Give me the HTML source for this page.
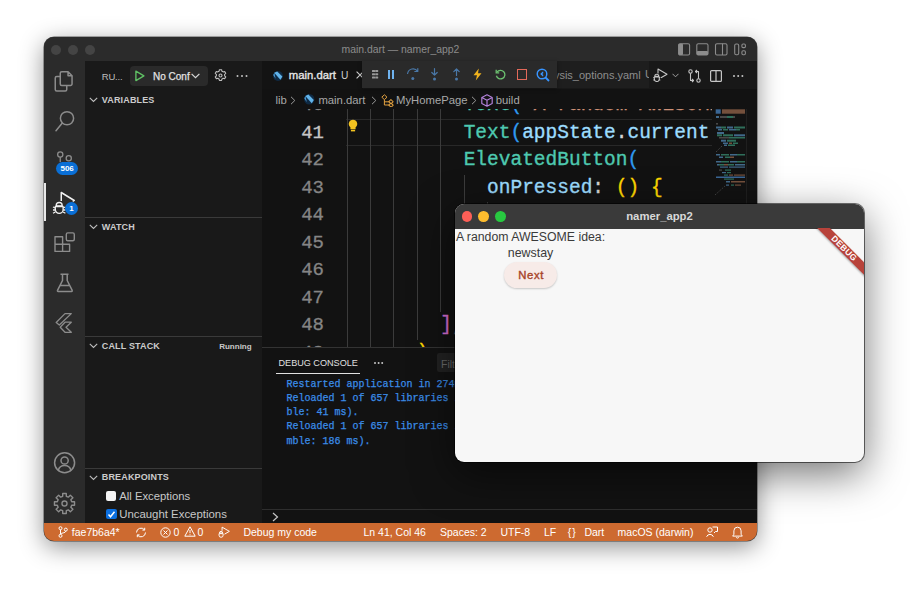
<!DOCTYPE html>
<html><head><meta charset="utf-8">
<style>
*{box-sizing:border-box;margin:0;padding:0}
html,body{width:910px;height:600px;overflow:hidden;background:#fff;font-family:"Liberation Sans",sans-serif}
.abs{position:absolute}
#vs{position:absolute;left:44px;top:37px;width:713px;height:504px;border-radius:10px;overflow:hidden;background:#2b2b2b;
 box-shadow:0 0 0 0.5px rgba(0,0,0,.6),0 6px 24px rgba(0,0,0,.44)}
#title{left:0;top:0;width:713px;height:24px;background:#2b2b2b}
.tl{position:absolute;top:8.3px;width:10px;height:10px;border-radius:50%;background:#444}
#titletext{position:absolute;left:0;width:713px;top:6.5px;text-align:center;color:#8b8b8b;font-size:10.4px}
.lay{position:absolute;top:7px;}
#act{left:0;top:24px;width:41px;height:462px;background:#2b2b2b}
#side{left:41px;top:24px;width:177px;height:462px;background:#191919}
#editor{left:218px;top:24px;width:495px;height:462px;background:#121212}
#status{left:0;top:486px;width:713px;height:18px;background:#cd6a30;color:#fff;font-size:10.5px}
#status span{position:absolute;top:3px;white-space:nowrap}
.bc{color:#a8a8a8;font-size:11.3px;white-space:nowrap}
.con{color:#3b8de8;-webkit-text-stroke:0.25px #3b8de8;font-family:"Liberation Mono",monospace;font-size:10px;line-height:14.3px;white-space:pre}
.sh{position:absolute;color:#cccccc;font-weight:bold;font-size:9px;letter-spacing:0.15px;margin-top:0.5px}
.chev{position:absolute;}
.bord{position:absolute;left:0;width:177px;height:1px;background:#3a3a3a}
#code{position:absolute;left:0;top:48px;width:450px;height:238px;overflow:hidden;font-family:"Liberation Mono",monospace;font-size:19.5px}
.ln{position:absolute;width:62px;text-align:right;color:#858585;left:0;font-family:"Liberation Mono",monospace;font-size:19px;line-height:27.5px;-webkit-text-stroke:0.3px}
.cl{position:absolute;left:84.6px;white-space:pre;color:#d4d4d4;line-height:27.5px;-webkit-text-stroke:0.35px}
.guide{position:absolute;width:1px;background:#3b3b3b}
#flutter{position:absolute;left:455px;top:204px;width:409px;height:258px;border-radius:9px;overflow:hidden;background:#f7f7f7;
 box-shadow:0 0 0 1px rgba(0,0,0,.55),0 12px 42px rgba(0,0,0,.55)}
</style></head><body>
<div id="vs">
 <div id="title" class="abs">
  <div class="tl" style="left:7px"></div><div class="tl" style="left:23.9px"></div><div class="tl" style="left:40.7px"></div>
  <div id="titletext">main.dart — namer_app2</div>
<svg class="abs" style="left:630px;top:4px" width="80" height="18" viewBox="0 0 80 18" fill="none" stroke="#8c8c8c" stroke-width="1.1">
   <rect x="4.6" y="2.8" width="11" height="11.2" rx="1.5"/><rect x="4.6" y="2.8" width="4.4" height="11.2" fill="#8c8c8c" stroke="none" rx="1"/>
   <rect x="22.8" y="2.8" width="11.2" height="11.2" rx="1.5"/><rect x="22.8" y="10" width="11.2" height="4" fill="#8c8c8c" stroke="none" rx="1"/>
   <rect x="41.5" y="2.8" width="11.5" height="11.2" rx="1.5"/><path d="M48.5 2.8 v11.2"/>
   <rect x="60.7" y="3" width="4" height="10.8" rx="1.5"/><rect x="67.9" y="3" width="3.5" height="3.6" rx="1.2"/><rect x="67.9" y="9.8" width="3.5" height="4" rx="1.2"/>
  </svg>
 </div>
 <div id="act" class="abs">
  <svg class="abs" style="left:0;top:0" width="41" height="462" viewBox="0 0 41 462" fill="none" stroke="#8c8c8c" stroke-width="1.5" stroke-linejoin="round">
   <!-- files: abs y offset 61 -->
   <path d="M16.25 15.5 h-3.5 a1.5 1.5 0 0 0 -1.5 1.5 v11.5 a1.5 1.5 0 0 0 1.5 1.5 h8.5 a1.5 1.5 0 0 0 1.5 -1.5 v-3.5"/>
   <path d="M16.25 12.3 a1.5 1.5 0 0 1 1.5 -1.5 h6.3 l4 4 v8.2 a1.5 1.5 0 0 1 -1.5 1.5 h-8.8 a1.5 1.5 0 0 1 -1.5 -1.5 z M24.05 10.8 v4 h4"/>
   <!-- search -->
   <circle cx="23" cy="57.25" r="6.6"/>
   <path d="M18.3 62 L12 69.7" stroke-linecap="round"/>
   <!-- source control -->
   <circle cx="16.25" cy="93.5" r="2.6" stroke-width="1.3"/>
   <circle cx="24.75" cy="97.25" r="2.6" stroke-width="1.3"/>
   <path d="M16.25 96.1 v5" stroke-width="1.3"/>
   <!-- extensions -->
   <path d="M11 175.8 h7.6 v14.6 h-7.6 z M11 183.3 h14.6 v7.1 h-7 M18.6 183.3 v7.1" stroke-width="1.4"/>
   <rect x="22.3" y="171.9" width="8" height="7.8" rx="1.5" stroke-width="1.4"/>
   <!-- flask -->
   <path d="M16.5 213.25 h8 M18.5 213.5 v6 l-5 9.8 a0.8 0.8 0 0 0 0.7 1.2 h13.3 a0.8 0.8 0 0 0 0.7 -1.2 l-5 -9.8 v-6 M15.8 224.5 h9.4"/>
   <!-- flutter -->
   <path d="M21 252.6 H27.3 L15.3 264 L12.2 261.5 Z M21 261.2 H27.3 L22 266.2 L27.3 271.3 H21 L16.2 266.2 Z" stroke-width="1.3"/>
   <!-- account -->
   <circle cx="20.6" cy="401.75" r="10"/>
   <circle cx="20.6" cy="399.5" r="3.6"/>
   <path d="M14.2 409.6 a6.6 6.6 0 0 1 12.8 0"/>
  </svg>
  <svg class="abs" style="left:9px;top:430.5px" width="23" height="23" viewBox="-11.5 -11.5 23 23" fill="none" stroke="#8c8c8c" stroke-width="1.4" stroke-linejoin="round"><path d="M-1.81 -7.17 L-1.79 -10.04 L1.79 -10.04 L1.81 -7.17 L3.79 -6.35 L5.83 -8.37 L8.37 -5.83 L6.35 -3.79 L7.17 -1.81 L10.04 -1.79 L10.04 1.79 L7.17 1.81 L6.35 3.79 L8.37 5.83 L5.83 8.37 L3.79 6.35 L1.81 7.17 L1.79 10.04 L-1.79 10.04 L-1.81 7.17 L-3.79 6.35 L-5.83 8.37 L-8.37 5.83 L-6.35 3.79 L-7.17 1.81 L-10.04 1.79 L-10.04 -1.79 L-7.17 -1.81 L-6.35 -3.79 L-8.37 -5.83 L-5.83 -8.37 L-3.79 -6.35 Z"/><circle cx="0" cy="0" r="2.5"/></svg>
  <!-- run & debug active -->
  <div class="abs" style="left:0;top:122px;width:2px;height:38px;background:#e8e8e8"></div>
  <svg class="abs" style="left:0;top:0" width="41" height="462" viewBox="0 0 41 462" fill="none" stroke="#f0f0f0" stroke-width="1.5" stroke-linejoin="round">
   <path d="M17.25 140 v-8.5 l13 8 -1.5 1"/>
   <g stroke-width="1.3" transform="translate(0,-1.5)">
    <path d="M12.2 146 a3 3 0 0 1 6 0 v0.5 h-6 z"/>
    <path d="M11.3 147 h7.8 v3 a3.9 3.9 0 0 1 -7.8 0 z"/>
    <path d="M9 147.5 l2.3 1 M9 150.5 h2.3 M9 153.8 l2.3 -1.3 M21.4 147.5 l-2.3 1 M21.4 150.5 h-2.3 M21.4 153.8 l-2.3 -1.3"/>
   </g>
  </svg>
  <div class="abs" style="left:21px;top:140.5px;width:13px;height:13px;border-radius:50%;background:#0a6fd6;color:#fff;font-size:8px;font-weight:bold;text-align:center;line-height:13px">1</div>
  <div class="abs" style="left:12px;top:100.5px;width:22.25px;height:13.5px;border-radius:7px;background:#0a6fd6;color:#fff;font-size:8px;font-weight:bold;text-align:center;line-height:13.5px">506</div>
 </div>
 <div id="side" class="abs">
  <div class="abs" style="left:16.8px;top:9.5px;color:#bdbdbd;font-size:9.5px;white-space:nowrap;letter-spacing:-0.2px">RU...</div>
  <div class="abs" style="left:45px;top:5.3px;width:78px;height:19.4px;border-radius:4px;background:#2a2a2a"></div>
  <svg class="abs" style="left:49px;top:9px" width="12" height="12" viewBox="0 0 12 12" fill="none" stroke="#5fbf64" stroke-width="1.4" stroke-linejoin="round"><path d="M1.9 1.2 v9.4 l8 -4.7 z"/></svg>
  <div class="abs" style="left:68px;top:9.6px;color:#e2e2e2;font-size:10px;white-space:nowrap;-webkit-text-stroke:0.25px #e2e2e2">No Conf</div>
  <svg class="abs" style="left:106px;top:11.5px" width="9" height="6" viewBox="0 0 9 6" fill="none" stroke="#d8d8d8" stroke-width="1.2"><path d="M0.6 0.8 l3.9 3.9 3.9 -3.9"/></svg>
  <svg class="abs" style="left:129px;top:8.3px" width="13" height="13" viewBox="-6.5 -6.5 13 13" fill="none" stroke="#c0c0c0" stroke-width="1.1" stroke-linejoin="round">
   <path d="M-1.1 -5.8 h2.2 l0.3 1.5 a4.4 4.4 0 0 1 1.3 .75 l1.45 -.5 1.1 1.9 -1.15 1 a4.4 4.4 0 0 1 0 1.5 l1.15 1 -1.1 1.9 -1.45 -.5 a4.4 4.4 0 0 1 -1.3 .75 l-.3 1.5 h-2.2 l-.3 -1.5 a4.4 4.4 0 0 1 -1.3 -.75 l-1.45 .5 -1.1 -1.9 1.15 -1 a4.4 4.4 0 0 1 0 -1.5 l-1.15 -1 1.1 -1.9 1.45 .5 a4.4 4.4 0 0 1 1.3 -.75 z"/><circle r="1.5"/></svg>
  <div class="abs" style="left:156px;top:13.8px;width:2.2px;height:2.2px;border-radius:50%;background:#c0c0c0;box-shadow:4.5px 0 0 #c0c0c0,-4.5px 0 0 #c0c0c0"></div>
  <!-- variables -->
  <svg class="abs chev" style="left:4px;top:36px" width="9" height="6" viewBox="0 0 9 6" fill="none" stroke="#bdbdbd" stroke-width="1.1"><path d="M0.8 0.8 l3.7 3.7 3.7 -3.7"/></svg>
  <div class="sh" style="left:16.8px;top:33px">VARIABLES</div>
  <div class="bord" style="top:156px"></div>
  <svg class="abs chev" style="left:4px;top:163px" width="9" height="6" viewBox="0 0 9 6" fill="none" stroke="#bdbdbd" stroke-width="1.1"><path d="M0.8 0.8 l3.7 3.7 3.7 -3.7"/></svg>
  <div class="sh" style="left:16.8px;top:160px">WATCH</div>
  <div class="bord" style="top:275px"></div>
  <svg class="abs chev" style="left:4px;top:282px" width="9" height="6" viewBox="0 0 9 6" fill="none" stroke="#bdbdbd" stroke-width="1.1"><path d="M0.8 0.8 l3.7 3.7 3.7 -3.7"/></svg>
  <div class="sh" style="left:16.8px;top:279px">CALL STACK</div>
  <div class="abs" style="left:134.2px;top:280.5px;color:#c8c8c8;font-weight:bold;font-size:8px">Running</div>
  <div class="bord" style="top:407px"></div>
  <svg class="abs chev" style="left:4px;top:414px" width="9" height="6" viewBox="0 0 9 6" fill="none" stroke="#bdbdbd" stroke-width="1.1"><path d="M0.8 0.8 l3.7 3.7 3.7 -3.7"/></svg>
  <div class="sh" style="left:16.8px;top:410px">BREAKPOINTS</div>
  <div class="abs" style="left:21px;top:429.8px;width:10.4px;height:10px;border-radius:2px;background:#f4f4f4"></div>
  <div class="abs" style="left:34.2px;top:428.6px;color:#c8c8c8;font-size:11.3px;white-space:nowrap">All Exceptions</div>
  <div class="abs" style="left:21px;top:448px;width:10.8px;height:10.4px;border-radius:2px;background:#0b6fe0"></div>
  <svg class="abs" style="left:21px;top:448px" width="11" height="11" viewBox="0 0 11 11" fill="none" stroke="#fff" stroke-width="1.5"><path d="M2.5 5.6 l2 2.2 4 -5"/></svg>
  <div class="abs" style="left:34.2px;top:447px;color:#c8c8c8;font-size:11.4px;white-space:nowrap">Uncaught Exceptions</div>
 </div>
 <div id="editor" class="abs">
  <!-- tab bar -->
  <div class="abs" style="left:0;top:0;width:495px;height:28px;background:#181818"></div>
  <div class="abs" style="left:0;top:0;width:101px;height:28px;background:#131313"></div>
  <div class="abs" style="left:250px;top:0;width:137px;height:27px;background:#1e1e1e;overflow:hidden">
    <div class="abs" style="right:8.3px;top:7.5px;color:#8d8d8d;font-size:11px;white-space:nowrap">analysis_options.yaml</div><div class="abs" style="left:133px;top:7px;color:#8d8d8d;font-size:11.4px">U</div>
  </div>
  <svg class="abs" style="left:10px;top:8.5px" width="12" height="12" viewBox="0 0 12 12"><circle cx="6" cy="6" r="5" fill="#0f2a44"/><path d="M2.2 2.8 L5.2 1.4 L10.4 6.6 L8.4 9.8 Z" fill="#62b4ea"/><path d="M1.2 5 L2.4 2.8 L3.6 8.8 Z" fill="#4a9ad4"/></svg>
  <div class="abs" style="left:26.8px;top:7.5px;color:#e6e6e6;font-size:11.3px;-webkit-text-stroke:0.35px #e6e6e6;white-space:nowrap">main.dart</div>
  <div class="abs" style="left:79px;top:8.5px;color:#d0d0d0;font-size:10.2px;white-space:nowrap">U</div>
  <svg class="abs" style="left:93.5px;top:9.5px" width="8" height="8" viewBox="0 0 8 8" stroke="#d0d0d0" stroke-width="1.1"><path d="M0.6 0.6 L7.4 7.4 M7.4 0.6 L0.6 7.4"/></svg>
  <!-- editor actions -->
  <svg class="abs" style="left:391px;top:7px" width="16" height="14" viewBox="0 0 16 14" fill="none" stroke="#c5c5c5" stroke-width="1.1" stroke-linejoin="round"><path d="M5 5.5 V1 l9 5.2 -6 3.5"/><path d="M1.8 8.2 a2 2 0 0 1 4 0 z M1.3 9 h5 v2 a2.5 2.5 0 0 1 -5 0 z M0.3 9.5 h1 M6.3 9.5 h1 M0.3 12 h1 M6.3 12 h1"/></svg>
  <svg class="abs" style="left:409.5px;top:12px" width="7" height="5" viewBox="0 0 7 5" fill="none" stroke="#a0a0a0" stroke-width="1"><path d="M0.5 0.8 l3 3 3 -3"/></svg>
  <svg class="abs" style="left:426px;top:8px" width="13" height="14" viewBox="0 0 13 14" fill="none" stroke="#c5c5c5" stroke-width="1.1" stroke-linejoin="round"><circle cx="2.5" cy="2.5" r="1.7"/><circle cx="10.5" cy="11.5" r="1.7"/><path d="M2.5 4.2 V11.5 h3 M4 10 l1.5 1.5 -1.5 1.5 M10.5 9.8 V2.5 h-3 M9 1 l-1.5 1.5 1.5 1.5"/></svg>
  <svg class="abs" style="left:448px;top:8.5px" width="12" height="12" viewBox="0 0 12 12" fill="none" stroke="#c5c5c5" stroke-width="1.2"><rect x="0.6" y="0.6" width="10.8" height="10.8" rx="1"/><path d="M6 0.6 V11.4"/></svg>
  <div class="abs" style="left:470.5px;top:13.5px;width:2px;height:2px;border-radius:50%;background:#c5c5c5;box-shadow:4.2px 0 0 #c5c5c5,8.4px 0 0 #c5c5c5"></div>
  <!-- breadcrumbs -->
  <div class="abs" style="left:0;top:28px;width:495px;height:20px;background:#121212"></div>
  <div class="abs bc" style="left:13.4px;top:32.5px">lib</div>
  <svg class="abs" style="left:28.3px;top:34.5px" width="6" height="9" viewBox="0 0 6 9" fill="none" stroke="#9a9a9a" stroke-width="1"><path d="M1 0.8 l3.8 3.7 -3.8 3.7"/></svg>
  <svg class="abs" style="left:40.5px;top:31.5px" width="12.5" height="12.5" viewBox="0 0 12 12"><circle cx="6" cy="6" r="5" fill="#0f2a44"/><path d="M2.2 2.8 L5.2 1.4 L10.4 6.6 L8.4 9.8 Z" fill="#62b4ea"/><path d="M1.2 5 L2.4 2.8 L3.6 8.8 Z" fill="#4a9ad4"/></svg>
  <div class="abs bc" style="left:56.4px;top:32.5px">main.dart</div>
  <svg class="abs" style="left:109px;top:34.5px" width="6" height="9" viewBox="0 0 6 9" fill="none" stroke="#9a9a9a" stroke-width="1"><path d="M1 0.8 l3.8 3.7 -3.8 3.7"/></svg>
  <svg class="abs" style="left:118.5px;top:32.5px" width="13" height="13" viewBox="0 0 13 13" fill="none" stroke="#e0a040" stroke-width="1" stroke-linejoin="round"><path d="M0.8 3.2 l2.6 -2.4 2.6 2.4 -2.6 2.4 z M3.4 5.6 V11 h5 M3.4 7.8 h5"/><rect x="8.4" y="6.2" width="3.2" height="3" transform="rotate(45 10 7.7)"/><rect x="8.4" y="9.6" width="3.2" height="3" transform="rotate(45 10 11.1)"/></svg>
  <div class="abs bc" style="left:134px;top:32.5px">MyHomePage</div>
  <svg class="abs" style="left:208.5px;top:34.5px" width="6" height="9" viewBox="0 0 6 9" fill="none" stroke="#9a9a9a" stroke-width="1"><path d="M1 0.8 l3.8 3.7 -3.8 3.7"/></svg>
  <svg class="abs" style="left:219px;top:32.5px" width="12" height="13" viewBox="0 0 12 13" fill="none" stroke="#b180d7" stroke-width="1.2" stroke-linejoin="round"><path d="M6 0.8 L11.2 3.5 V9.5 L6 12.2 L0.8 9.5 V3.5 Z M0.8 3.5 L6 6.2 L11.2 3.5 M6 6.2 V12.2"/></svg>
  <div class="abs bc" style="left:233.8px;top:32.5px">build</div>
  <div id="code"><div class="abs" style="left:84px;top:9.6px;width:411px;height:27px;border-top:1px solid #282828;border-bottom:1px solid #282828"></div>
<div class="guide" style="left:84.6px;top:-17.0px;height:275.0px"></div>
<div class="guide" style="left:108.0px;top:-17.0px;height:275.0px"></div>
<div class="guide" style="left:131.4px;top:-17.0px;height:275.0px"></div>
<div class="guide" style="left:154.8px;top:-17.0px;height:247.5px"></div>
<div class="guide" style="left:178.2px;top:-17.0px;height:220.0px"></div>
<div class="guide" style="left:201.6px;top:65.5px;height:110.0px"></div>
<div class="guide" style="left:225.0px;top:93px;height:27.5px"></div>
<div class="ln" style="top:-17.0px;color:#858585">40</div>
<div class="cl" style="top:-17.0px">          <span style="color:#4ec9b0">Text</span><span style="color:#2f9af0">(</span><span style="color:#ce9178">'A random AWESOME idea:'</span><span style="color:#2f9af0">)</span><span style="color:#d4d4d4">,</span></div>
<div class="ln" style="top:10.5px;color:#c6c6c6">41</div>
<div class="cl" style="top:10.5px">          <span style="color:#4ec9b0">Text</span><span style="color:#2f9af0">(</span><span style="color:#9cdcfe">appState</span><span style="color:#d4d4d4">.</span><span style="color:#9cdcfe">current</span><span style="color:#d4d4d4">.</span><span style="color:#9cdcfe">asLowerCase</span><span style="color:#2f9af0">)</span><span style="color:#d4d4d4">,</span></div>
<div class="ln" style="top:38.0px;color:#858585">42</div>
<div class="cl" style="top:38.0px">          <span style="color:#4ec9b0">ElevatedButton</span><span style="color:#2f9af0">(</span></div>
<div class="ln" style="top:65.5px;color:#858585">43</div>
<div class="cl" style="top:65.5px">            <span style="color:#9cdcfe">onPressed</span><span style="color:#d4d4d4">:</span> <span style="color:#ffd700">()</span> <span style="color:#ffd700">{</span></div>
<div class="ln" style="top:93.0px;color:#858585">44</div>
<div class="cl" style="top:93.0px">              <span style="color:#9cdcfe">appState</span><span style="color:#d4d4d4">.</span><span style="color:#dcdcaa">getNext</span><span style="color:#da70d6">()</span><span style="color:#d4d4d4">;</span></div>
<div class="ln" style="top:120.5px;color:#858585">45</div>
<div class="cl" style="top:120.5px">            <span style="color:#ffd700">}</span><span style="color:#d4d4d4">,</span></div>
<div class="ln" style="top:148.0px;color:#858585">46</div>
<div class="cl" style="top:148.0px">            <span style="color:#9cdcfe">child</span><span style="color:#d4d4d4">: </span><span style="color:#4ec9b0">Text</span><span style="color:#ffd700">(</span><span style="color:#ce9178">'Next'</span><span style="color:#ffd700">)</span><span style="color:#d4d4d4">,</span></div>
<div class="ln" style="top:175.5px;color:#858585">47</div>
<div class="cl" style="top:175.5px">          <span style="color:#2f9af0">)</span><span style="color:#d4d4d4">,</span></div>
<div class="ln" style="top:203.0px;color:#858585">48</div>
<div class="cl" style="top:203.0px">        <span style="color:#da70d6">]</span><span style="color:#d4d4d4">,</span></div>
<div class="ln" style="top:230.5px;color:#858585">49</div>
<div class="cl" style="top:230.5px">      <span style="color:#ffd700">)</span><span style="color:#d4d4d4">,</span></div>
<svg class="abs" style="left:86px;top:10px" width="10" height="14" viewBox="0 0 10 14"><path d="M5 0.8 a4.2 4.2 0 0 0 -2.6 7.5 v1.9 h5.2 v-1.9 a4.2 4.2 0 0 0 -2.6 -7.5z" fill="#f3c320"/><rect x="2.9" y="10.8" width="4.2" height="1.6" fill="#f3c320"/></svg></div>
<div class="abs" style="left:100.2px;top:-0.5px;width:194.5px;height:27px;background:#2a2a2a;box-shadow:0 1px 4px rgba(0,0,0,.35)">
   <div class="abs" style="left:10.2px;top:9.8px;width:2.2px;height:2.2px;border-radius:0.5px;background:#9a9a9a;box-shadow:3.2px 0 0 #9a9a9a,0 3.3px 0 #9a9a9a,3.2px 3.3px 0 #9a9a9a,0 6.6px 0 #9a9a9a,3.2px 6.6px 0 #9a9a9a"></div>
   <div class="abs" style="left:25.9px;top:9.9px;width:2px;height:8.3px;background:#6fb3f0"></div>
   <div class="abs" style="left:30.3px;top:9.9px;width:2px;height:8.3px;background:#6fb3f0"></div>
   <svg class="abs" style="left:0;top:0" width="194" height="27" viewBox="0 0 194 27" fill="none" stroke="#4a78a8" stroke-width="1.2" stroke-linecap="round" stroke-linejoin="round">
    <path d="M45.6 12.5 a5.5 5.5 0 0 1 10 -2.2 M55.8 7.5 v3 h-3"/><circle cx="50.8" cy="17.4" r="1.5" fill="#4a78a8" stroke="none"/>
    <path d="M72.5 7.5 v6.5 M69.8 11.5 l2.7 2.7 2.7 -2.7"/><circle cx="72.5" cy="18" r="1.5" fill="#4a78a8" stroke="none"/>
    <path d="M94.5 14.5 v-6.5 M91.8 10.7 l2.7 -2.7 2.7 2.7"/><circle cx="94.5" cy="18" r="1.5" fill="#4a78a8" stroke="none"/>
   </svg>
   <svg class="abs" style="left:110px;top:7.5px" width="11" height="13" viewBox="0 0 11 13"><path d="M6.8 0.5 L1.5 7.3 H5 L3.8 12.5 L9.5 5.2 H6 Z" fill="#f0b21d"/></svg>
   <svg class="abs" style="left:132.5px;top:8.3px" width="11" height="11" viewBox="0 0 11 11" fill="none" stroke="#6cc070" stroke-width="1.3"><path d="M2 3.2 a4.3 4.3 0 1 1 -0.6 3.6"/><path d="M1.2 0.8 v3 h3"/></svg>
   <div class="abs" style="left:154.8px;top:8.8px;width:9.8px;height:10.5px;border:1.4px solid #e2695a"></div>
   <svg class="abs" style="left:174px;top:7px" width="14" height="14" viewBox="0 0 14 14" fill="none" stroke="#3794ff" stroke-width="1.4"><circle cx="6" cy="6" r="4.8"/><path d="M9.5 9.5 l3.5 3.5" stroke-width="1.8"/><path d="M7.2 3.8 l-2.2 2.2 2.2 2.2 M5.2 6 h2" stroke-width="1.1"/></svg>
  </div>
  <div class="abs" style="left:453px;top:48px;width:42px;height:239px;background:#121212">
   <div class="abs" style="left:30.5px;top:0;width:1px;height:239px;background:#1f1f1f"></div>
   <svg class="abs" style="left:0;top:0" width="42" height="100" viewBox="0 0 42 100">
<rect x="0.7" y="0.3" width="5.0" height="4.4" fill="#3a6694"/>
<rect x="7.0" y="0.3" width="23.0" height="4.4" fill="#74503c"/>
<rect x="1.0" y="7.0" width="3.0" height="2" fill="#41698a"/>
<rect x="5.0" y="7.0" width="7.0" height="2" fill="#484848"/>
<rect x="12.0" y="7.0" width="6.0" height="2" fill="#2f6e5a"/>
<rect x="18.0" y="7.0" width="2.0" height="2" fill="#484848"/>
<rect x="1.0" y="14.0" width="2.0" height="1.6" fill="#484848"/>
<rect x="1.0" y="17.5" width="5.0" height="2" fill="#41698a"/>
<rect x="6.0" y="17.5" width="5.0" height="2" fill="#2f6e5a"/>
<rect x="12.0" y="17.5" width="6.0" height="2" fill="#41698a"/>
<rect x="19.0" y="17.5" width="11.0" height="2" fill="#2f6e5a"/>
<rect x="3.0" y="20.0" width="4.0" height="1.5" fill="#41698a"/>
<rect x="8.0" y="20.0" width="5.0" height="1.5" fill="#2f6e5a"/>
<rect x="14.0" y="20.0" width="7.0" height="1.5" fill="#41698a"/>
<rect x="21.0" y="20.0" width="4.0" height="1.5" fill="#2f6e5a"/>
<rect x="2.0" y="23.0" width="7.0" height="2" fill="#41698a"/>
<rect x="2.0" y="25.3" width="5.0" height="2" fill="#2f6e5a"/>
<rect x="8.0" y="25.3" width="10.0" height="2" fill="#2f6e5a"/>
<rect x="19.0" y="25.3" width="11.0" height="2" fill="#41698a"/>
<rect x="4.0" y="28.0" width="10.0" height="1.5" fill="#484848"/>
<rect x="14.0" y="28.0" width="16.0" height="1.5" fill="#2f6e5a"/>
<rect x="6.0" y="30.7" width="5.0" height="2" fill="#41698a"/>
<rect x="12.0" y="30.7" width="9.0" height="2" fill="#2f6e5a"/>
<rect x="8.0" y="33.5" width="5.0" height="1.5" fill="#41698a"/>
<rect x="14.0" y="33.5" width="3.0" height="1.5" fill="#74503c"/>
<rect x="18.0" y="33.5" width="5.0" height="1.5" fill="#2f6e5a"/>
<rect x="9.0" y="35.5" width="3.0" height="1.5" fill="#41698a"/>
<rect x="13.0" y="35.5" width="7.0" height="1.5" fill="#2f6e5a"/>
<rect x="1.0" y="45.0" width="4.0" height="1.5" fill="#41698a"/>
<rect x="6.0" y="45.0" width="8.0" height="1.5" fill="#2f6e5a"/>
<rect x="15.0" y="45.0" width="7.0" height="1.5" fill="#41698a"/>
<rect x="22.0" y="45.0" width="8.0" height="1.5" fill="#2f6e5a"/>
<rect x="4.0" y="47.5" width="4.0" height="1.5" fill="#41698a"/>
<rect x="10.0" y="47.5" width="5.0" height="1.5" fill="#2f6e5a"/>
<rect x="15.0" y="47.5" width="4.0" height="1.5" fill="#74503c"/>
<rect x="1.0" y="52.0" width="5.0" height="1.5" fill="#41698a"/>
<rect x="6.0" y="52.0" width="8.0" height="1.5" fill="#2f6e5a"/>
<rect x="15.0" y="52.0" width="7.0" height="1.5" fill="#41698a"/>
<rect x="22.0" y="52.0" width="8.0" height="1.5" fill="#2f6e5a"/>
<rect x="2.0" y="55.0" width="2.0" height="1.5" fill="#41698a"/>
<rect x="4.0" y="55.0" width="5.0" height="1.5" fill="#2f6e5a"/>
<rect x="9.0" y="55.0" width="4.0" height="1.5" fill="#74503c"/>
<rect x="13.0" y="55.0" width="6.0" height="1.5" fill="#2f6e5a"/>
<rect x="20.0" y="55.0" width="10.0" height="1.5" fill="#41698a"/>
<rect x="5.0" y="57.5" width="8.0" height="1.2" fill="#41698a"/>
<rect x="14.0" y="57.5" width="16.0" height="1.2" fill="#41698a"/>
<rect x="4.0" y="60.5" width="3.0" height="1.2" fill="#484848"/>
<rect x="10.0" y="60.5" width="6.0" height="1.2" fill="#2f6e5a"/>
<rect x="7.0" y="63.0" width="4.0" height="1.2" fill="#41698a"/>
<rect x="12.0" y="63.0" width="4.0" height="1.2" fill="#2f6e5a"/>
<rect x="9.0" y="65.5" width="4.0" height="1.2" fill="#2f6e5a"/>
<rect x="14.0" y="65.5" width="4.0" height="1.2" fill="#74503c"/>
<rect x="19.0" y="65.5" width="11.0" height="1.2" fill="#74503c"/>
<rect x="1.0" y="67.5" width="19.0" height="1.5" fill="#3a6694"/>
<rect x="20.0" y="67.5" width="10.0" height="1.5" fill="#3a6694"/>
<rect x="9.0" y="69.5" width="10.0" height="1.2" fill="#2f6e5a"/>
<rect x="11.0" y="72.0" width="4.0" height="1.5" fill="#41698a"/>
<rect x="16.0" y="72.0" width="4.0" height="1.5" fill="#74503c"/>
<rect x="20.0" y="72.0" width="10.0" height="1.5" fill="#74503c"/>
<rect x="11.0" y="75.5" width="3.0" height="1.2" fill="#41698a"/>
<rect x="16.0" y="75.5" width="3.0" height="1.2" fill="#2f6e5a"/>
<rect x="20.0" y="75.5" width="6.0" height="1.2" fill="#74503c"/>
<path d="M1 43 L7 37" stroke="#484848" stroke-width="1" stroke-dasharray="1.2 1.2"/>
<path d="M0 86 L10 77" stroke="#484848" stroke-width="1" stroke-dasharray="1.2 1.2"/>
</svg>
  </div>
  <div id="panel" class="abs" style="left:0;top:286px;width:495px;height:176px;background:#121212;border-top:1px solid #333">
  <div class="abs" style="left:16.5px;top:9.5px;color:#e0e0e0;font-size:9.1px;white-space:nowrap">DEBUG CONSOLE</div>
  <div class="abs" style="left:14px;top:25px;width:84px;height:1.2px;background:#e0e0e0"></div>
  <div class="abs" style="left:111.5px;top:13.5px;width:2px;height:2px;border-radius:50%;background:#c5c5c5;box-shadow:3.6px 0 0 #c5c5c5,7.2px 0 0 #c5c5c5"></div>
  <div class="abs" style="left:174.5px;top:4.8px;width:60px;height:19.5px;background:#222;border-radius:2px"></div>
  <div class="abs" style="left:179px;top:9.5px;color:#6a6a6a;font-size:10.5px">Filter</div>
  <div class="abs con" style="left:24.6px;top:29.6px">Restarted application in 274ms.<br>Reloaded 1 of 657 libraries in 271ms (compile: 17 ms, reload: 112 ms, reassem<br>ble: 41 ms).<br>Reloaded 1 of 657 libraries in 386ms (compile: 22 ms, reload: 98 ms, reasse<br>mble: 186 ms).</div>
  <div class="abs" style="left:0;top:161.3px;width:495px;height:1px;background:#2e2e2e"></div>
  <svg class="abs" style="left:10px;top:163.5px" width="7" height="10" viewBox="0 0 7 10" fill="none" stroke="#c5c5c5" stroke-width="1.2"><path d="M1 1 l4.5 4 -4.5 4"/></svg>
 </div>
 </div>
 <div id="status" class="abs">
  <svg class="abs" style="left:14px;top:3px" width="10" height="12" viewBox="0 0 10 12" fill="none" stroke="#fff" stroke-width="1"><circle cx="2.5" cy="2.2" r="1.5"/><circle cx="2.5" cy="9.8" r="1.5"/><circle cx="7.8" cy="3.6" r="1.5"/><path d="M2.5 3.7 V8.3 M7.8 5.1 c0 2.3 -5.3 1.5 -5.3 3.2"/></svg>
  <span style="left:27.8px">fae7b6a4*</span>
  <svg class="abs" style="left:90.5px;top:3.5px" width="12" height="11" viewBox="0 0 12 11" fill="none" stroke="#fff" stroke-width="1"><path d="M1.5 5.5 a4.5 4.5 0 0 1 8 -2.7 M10.5 5.5 a4.5 4.5 0 0 1 -8 2.7 M9.7 0.8 v2.3 h-2.3 M2.3 10.2 v-2.3 h2.3"/></svg>
  <svg class="abs" style="left:115.5px;top:3.5px" width="11" height="11" viewBox="0 0 11 11" fill="none" stroke="#fff" stroke-width="1"><circle cx="5.5" cy="5.5" r="4.7"/><path d="M3.5 3.5 l4 4 M7.5 3.5 l-4 4"/></svg>
  <span style="left:129.5px">0</span>
  <svg class="abs" style="left:139.5px;top:3px" width="12" height="11" viewBox="0 0 12 11" fill="none" stroke="#fff" stroke-width="1" stroke-linejoin="round"><path d="M6 0.8 L11.2 10.2 H0.8 Z M6 4 v3.2 M6 8.3 v0.9"/></svg>
  <span style="left:153.5px">0</span>
  <svg class="abs" style="left:173.5px;top:3px" width="13" height="12" viewBox="0 0 16 14" fill="none" stroke="#fff" stroke-width="1.2" stroke-linejoin="round"><path d="M5 5.5 V1 l9 5.2 -6 3.5"/><path d="M1.8 8.2 a2 2 0 0 1 4 0 z M1.3 9 h5 v2 a2.5 2.5 0 0 1 -5 0 z"/></svg>
  <span style="left:199.4px">Debug my code</span>
  <span style="left:319.5px">Ln 41, Col 46</span>
  <span style="left:396px">Spaces: 2</span>
  <span style="left:456.4px">UTF-8</span>
  <span style="left:500px">LF</span>
  <span style="left:523.7px;letter-spacing:1px">{}</span>
  <span style="left:540.4px">Dart</span>
  <span style="left:573.6px">macOS (darwin)</span>
  <svg class="abs" style="left:662px;top:3px" width="12" height="12" viewBox="0 0 12 12" fill="none" stroke="#fff" stroke-width="1"><circle cx="4" cy="4" r="2.2"/><path d="M0.6 10.8 a3.6 3.6 0 0 1 6.8 0 M6.5 1 h5 v4.5 h-2 l-1.5 1.5"/></svg>
  <svg class="abs" style="left:688px;top:2.5px" width="11" height="13" viewBox="0 0 11 13" fill="none" stroke="#fff" stroke-width="1" stroke-linejoin="round"><path d="M5.5 1.2 a3.6 3.6 0 0 0 -3.6 3.6 v3.5 l-1.2 1.8 h9.6 l-1.2 -1.8 v-3.5 a3.6 3.6 0 0 0 -3.6 -3.6 z M4.2 11.2 a1.4 1.4 0 0 0 2.6 0"/></svg>
 </div>
</div>
<div id="flutter">
  <div class="abs" style="left:0;top:0;width:409px;height:24.5px;background:#3a3a3a"></div>
  <div class="abs" style="left:6.5px;top:7px;width:10.8px;height:10.8px;border-radius:50%;background:#fe5f57"></div>
  <div class="abs" style="left:23.3px;top:7px;width:10.8px;height:10.8px;border-radius:50%;background:#febc2e"></div>
  <div class="abs" style="left:40.1px;top:7px;width:10.8px;height:10.8px;border-radius:50%;background:#28c840"></div>
  <div class="abs" style="left:0;top:6px;width:409px;text-align:center;color:#d8d8d8;font-weight:bold;font-size:11.3px">namer_app2</div>
  <div class="abs" style="left:0.9px;top:25.8px;color:#3a3a3a;font-size:12.3px;white-space:nowrap">A random AWESOME idea:</div>
  <div class="abs" style="left:52.8px;top:42.3px;color:#3a3a3a;font-size:12.4px;white-space:nowrap">newstay</div>
  <div class="abs" style="left:49.2px;top:58px;width:53px;height:25.7px;border-radius:13px;background:#f7ebe8;box-shadow:0 1px 2px rgba(0,0,0,.2)"></div>
  <div class="abs" style="left:49.7px;top:65.2px;width:53px;text-align:center;color:#a8452a;font-size:11.3px;letter-spacing:0.6px;-webkit-text-stroke:0.4px #a8452a">Next</div>
  <div class="abs" style="left:329px;top:24px;width:80px;height:80px;overflow:hidden">
    <div class="abs" style="left:20px;top:15.5px;width:80px;height:9px;background:#b8433b;transform:rotate(45deg);transform-origin:50% 50%;box-shadow:0 1px 2px rgba(0,0,0,.3);color:#fff;font-weight:bold;font-size:8.5px;line-height:9px;text-align:center;letter-spacing:0.3px">DEBUG</div>
  </div>
 </div>
</body></html>
